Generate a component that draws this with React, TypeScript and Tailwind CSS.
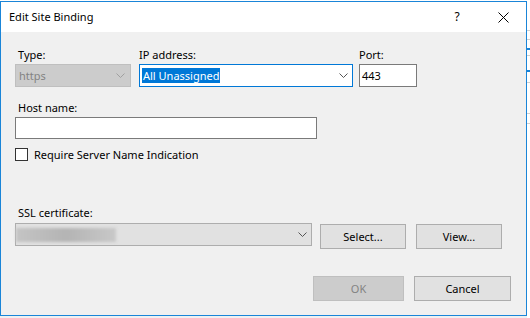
import React from 'react';

const font = "font-['Segoe_UI','Noto_Sans',sans-serif]";

function Chevron({ color = '#555' }: { color?: string }) {
  return (
    <svg width="9" height="5" viewBox="0 0 9 5" className="shrink-0">
      <polyline points="0.5,0.5 4.5,4.5 8.5,0.5" fill="none" stroke={color} strokeWidth="1" />
    </svg>
  );
}

function Button({ label, width, disabled }: { label: string; width: string; disabled?: boolean }) {
  return (
    <div
      className={`${width} flex h-[25px] items-center justify-center border ${
        disabled ? 'border-[#bfbfbf] bg-[#cccccc] text-[#838383]' : 'border-[#adadad] bg-[#e1e1e1] text-black'
      }`}
    >
      {label}
    </div>
  );
}

// window behind the dialog, only a sliver of it shows on the right
function BackWindow() {
  return (
    <div className="flex w-[3px] flex-col bg-white">
      <div className="h-[30px]" />
      <div className="h-px bg-[#d0d0d0]" />
      <div className="h-[8px]" />
      <div className="h-px bg-[#d0d0d0]" />
      <div className="h-[8px]" />
      <div className="h-[2px] bg-[#1883d7]" />
      <div className="h-[5px]" />
      <div className="h-px bg-[#d0d0d0]" />
      <div className="h-[14px]" />
      <div className="h-[2px] bg-[#1883d7]" />
      <div className="h-[10px]" />
      <div className="h-px bg-[#d0d0d0]" />
      <div className="h-[30px]" />
      <div className="h-px bg-[#d0d0d0]" />
      <div className="h-[9px]" />
      <div className="h-px bg-[#d0d0d0]" />
      <div className="flex-1" />
    </div>
  );
}

export default function App() {
  return (
    <div className={`${font} flex h-[318px] w-[530px] overflow-hidden bg-[#f0f0f0] text-[11px] leading-4 text-black`}>
      <div className="flex flex-col">
        <div className="h-px bg-white" />
        <div className="flex h-[315px] w-[527px] flex-col border border-[#1a85d8]">
          {/* title bar */}
          <div className="flex h-[30px] items-center bg-white">
            <span className="pl-[8px]">Edit Site Binding</span>
            <div className="flex-1" />
            <div className="flex h-full w-[46px] items-center justify-center text-[12px]">?</div>
            <div className="flex h-full w-[46px] items-center justify-center">
              <svg width="11" height="11" viewBox="0 0 11 11">
                <path d="M0.5 0.5 L10.5 10.5 M10.5 0.5 L0.5 10.5" stroke="#000" strokeWidth="1" />
              </svg>
            </div>
          </div>

          {/* body */}
          <div className="flex flex-1 flex-col bg-[#f0f0f0] pl-[14px] pr-[15px]">
            <div className="mt-[15px] flex">
              <div className="flex w-[116px] flex-col">
                <span className="pl-[3px]">Type:</span>
                <div className="mt-px flex h-[23px] items-center border border-[#bfbfbf] bg-[#cccccc] pl-[3px] pr-[5px] text-[#838383]">
                  <span className="flex-1">https</span>
                  <Chevron color="#a0a0a0" />
                </div>
              </div>
              <div className="ml-[8px] flex w-[214px] flex-col">
                <span>IP address:</span>
                <div className="mt-px flex h-[23px] items-center border border-[#0078d7] bg-white pl-[2px] pr-[4px]">
                  <div className="flex-1">
                    <span className="bg-[#0078d7] px-px text-white">All Unassigned</span>
                  </div>
                  <Chevron />
                </div>
              </div>
              <div className="ml-[6px] flex w-[58px] flex-col">
                <span>Port:</span>
                <div className="mt-px flex h-[23px] items-center border border-[#7a7a7a] bg-white pl-[2px]">443</div>
              </div>
            </div>

            <span className="mt-[13px] pl-[3px]">Host name:</span>
            <div className="mt-px h-[22px] w-[302px] border border-[#7a7a7a] bg-white" />

            <div className="mt-[9px] flex h-[13px] items-center">
              <div className="h-[13px] w-[13px] border border-[#333333] bg-white" />
              <span className="ml-[6px]">Require Server Name Indication</span>
            </div>

            <span className="mt-[44px] pl-[3px]">SSL certificate:</span>
            <div className="mt-[2px] flex items-start">
              <div className="flex h-[23px] w-[297px] items-center border border-[#adadad] bg-[#e1e1e1] pr-[4px]">
                <div className="flex-1">
                  <div className="h-[14px] w-[100px] bg-gradient-to-r from-[#c4c4c4] via-[#b4b4b4] to-[#c8c8c8] blur-[1.5px]" />
                </div>
                <Chevron />
              </div>
              <div className="ml-[8px] mt-px">
                <Button label="Select..." width="w-[86px]" />
              </div>
              <div className="ml-[10px] mt-px">
                <Button label="View..." width="w-[86px]" />
              </div>
            </div>

            <div className="mt-[27px] flex justify-end">
              <Button label="OK" width="w-[91px]" disabled />
              <div className="ml-[10px]">
                <Button label="Cancel" width="w-[97px]" />
              </div>
            </div>
          </div>
        </div>
      </div>
      <BackWindow />
    </div>
  );
}
